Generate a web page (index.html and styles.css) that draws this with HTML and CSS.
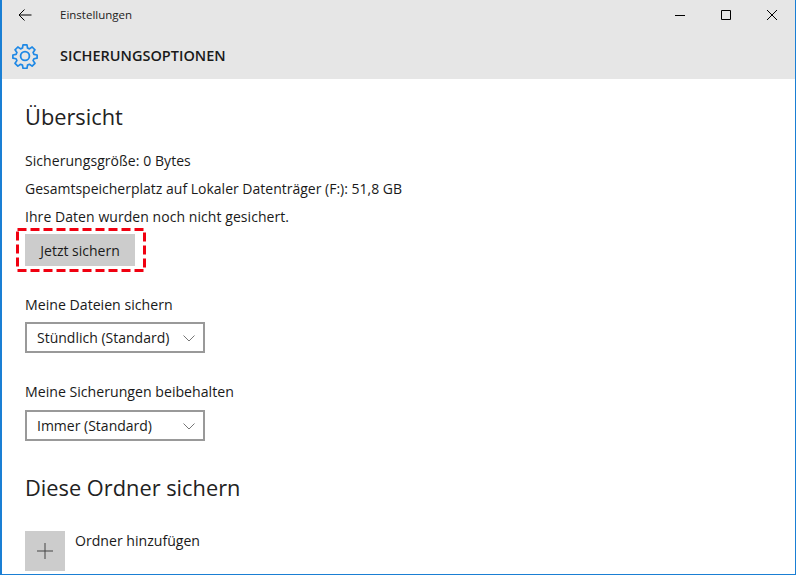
FILE: index.html
```html
<!DOCTYPE html>
<html lang="de">
<head>
<meta charset="utf-8">
<title>Einstellungen</title>
<link rel="stylesheet" href="styles.css">
</head>
<body>
<div class="window">
  <header class="chrome">
    <div class="titlebar">
      <svg class="back" width="14" height="12" viewBox="0 0 14 12"><path d="M6.500.5 1 6l5.500 5.500M1 6h12.500" fill="none" stroke="#000" stroke-width="1"/></svg>
      <span class="apptitle">Einstellungen</span>
      <div class="controls">
        <span class="ctl"><svg width="12" height="12" viewBox="0 0 12 12"><path d="M1 6.500h10" stroke="#000" fill="none"/></svg></span>
        <span class="ctl"><svg width="12" height="12" viewBox="0 0 12 12"><path d="M1.500 1.500h9v9h-9z" stroke="#000" fill="none"/></svg></span>
        <span class="ctl"><svg width="12" height="12" viewBox="0 0 12 12"><path d="M1 1l10 10M11 1 1 11" stroke="#000" fill="none"/></svg></span>
      </div>
    </div>
    <div class="pagehead">
      <svg class="gear" width="26" height="26" viewBox="0 0 26 26"><path d="M10.900 1.500h4.200l.6 3.400 2 .9 2.900-2 3 3-2 2.900.9 2 3.400.6v3.400l-3.400.6-.9 2 2 2.900-3 3-2.900-2-2 .9-.6 3.400h-4.200l-.6-3.400-2-.9-2.900 2-3-3 2-2.900-.9-2-3.400-.6v-3.400l3.400-.6.9-2-2-2.900 3-3 2.900 2 2-.9z" transform="translate(13 13) scale(.94) translate(-13 -13.400)" fill="none" stroke="#1e88e5" stroke-width="1.800" stroke-linejoin="round"/><circle cx="13" cy="13" r="4.400" fill="none" stroke="#1e88e5" stroke-width="1.800"/></svg>
      <h1 class="pagetitle">SICHERUNGSOPTIONEN</h1>
    </div>
  </header>
  <main class="content">
    <h2 class="section">Übersicht</h2>
    <p class="line first wide">Sicherungsgröße: 0 Bytes</p>
    <p class="line">Gesamtspeicherplatz auf Lokaler Datenträger (F:): 51,8 GB</p>
    <p class="line wide">Ihre Daten wurden noch nicht gesichert.</p>
    <div class="highlight">
      <button class="btn">Jetzt sichern</button>
      <svg class="dash" width="130" height="44" viewBox="0 0 130 44"><rect x="1.500" y="1.500" width="127" height="41" fill="none" stroke="#f00010" stroke-width="3" stroke-dasharray="9 4"/></svg>
    </div>
    <label class="field-label">Meine Dateien sichern</label>
    <div class="select"><span>Stündlich (Standard)</span><svg width="12" height="7" viewBox="0 0 12 7"><path d="M.5.5 6 6l5.500-5.500" fill="none" stroke="#767676"/></svg></div>
    <label class="field-label second">Meine Sicherungen beibehalten</label>
    <div class="select"><span>Immer (Standard)</span><svg width="12" height="7" viewBox="0 0 12 7"><path d="M.5.5 6 6l5.500-5.500" fill="none" stroke="#767676"/></svg></div>
    <h2 class="section lower">Diese Ordner sichern</h2>
    <div class="add">
      <span class="addicon"><svg width="16" height="16" viewBox="0 0 16 16"><path d="M8 0v16M0 8h16" stroke="#444" fill="none"/></svg></span>
      <span class="addlabel">Ordner hinzufügen</span>
    </div>
  </main>
</div>
</body>
</html>
```
FILE: styles.css
```css
* { box-sizing: border-box; }
html, body { margin: 0; height: 100%; }
body { font-family: "Open Sans", "Noto Sans", sans-serif; color: #1a1a1a; background: #fff; overflow: hidden; }
.window { width: 796px; height: 575px; border: solid #1a7fd4; border-width: 0 1px 1px 2px; overflow: hidden; display: flex; flex-direction: column; }
.chrome { background: #e6e6e6; height: 79px; flex: none; }
.titlebar { height: 30px; display: flex; align-items: center; padding-left: 16px; }
.back { flex: none; }
.apptitle { font-size: 11.500px; margin-left: 28px; padding-bottom: 1px; color: #222; }
.controls { margin-left: auto; display: flex; }
.ctl { width: 46px; height: 30px; display: flex; align-items: center; justify-content: center; }
.pagehead { height: 49px; display: flex; align-items: center; padding: 2px 0 0 10px; }
.gear { flex: none; }
.pagetitle { margin: 0 0 0 22px; font-size: 14.500px; font-weight: 600; color: #1a1a1a; }
.content { padding: 0 23px; flex: 1; }
.section { margin: 0; font-size: 21.800px; font-weight: 400; line-height: 30px; color: #222; }
.content > .section:first-child { margin-top: 23px; }
.line { margin: 0; font-size: 14px; line-height: 28px; }
.line.first { margin-top: 15px; }
.line.wide { letter-spacing: .06px; }
.highlight { position: relative; width: 130px; height: 44px; margin: -3px 0 0 -9px; padding: 6px 0 0 9px; }
.dash { position: absolute; left: 0; top: 0; }
.btn { display: block; width: 110px; height: 32px; border: 0; padding: 0; background: #ccc; font: 14px "Open Sans", sans-serif; color: #1a1a1a; }
.field-label { display: block; font-size: 14.150px; line-height: 20px; margin-top: 23px; }
.field-label.second { margin-top: 29px; }
.select { width: 180px; height: 31px; margin-top: 7px; border: 2px solid #999; display: flex; align-items: center; justify-content: space-between; padding: 0 8px 0 10px; font-size: 14px; }
.second + .select { margin-top: 8px; }
.select svg { margin-top: 2px; }
.lower { margin-top: 32px; }
.add { display: flex; margin-top: 28px; }
.addicon { width: 40px; height: 40px; background: #ccc; display: flex; align-items: center; justify-content: center; }
.addlabel { font-size: 14.100px; margin-left: 10px; line-height: 20px; }
```
